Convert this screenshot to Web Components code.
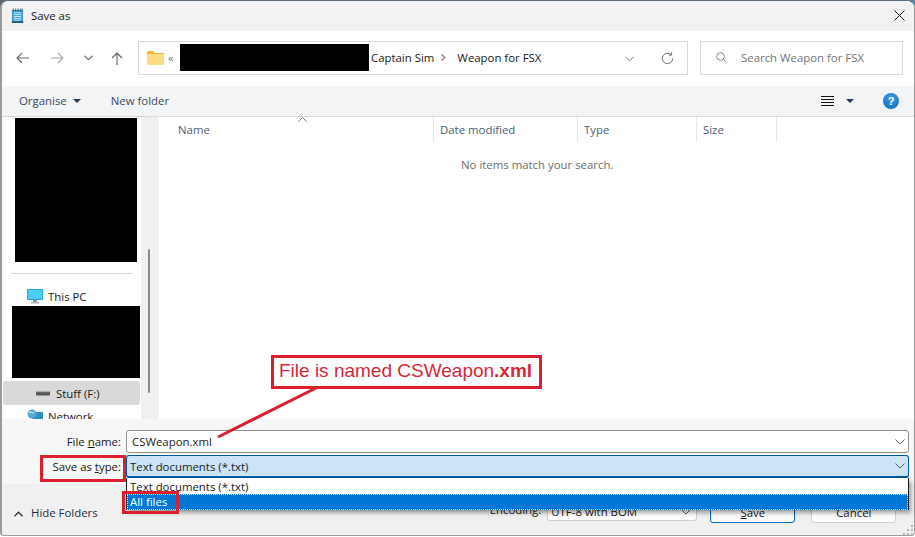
<!DOCTYPE html>
<html lang="en">
<head>
<meta charset="utf-8">
<title>Save as</title>
<style>
html, body{ margin: 0; padding: 0; height: 100%; background: #fff; overflow: hidden; }
</style>
</head>
<body>
<save-dialog></save-dialog>

<script>
class base extends HTMLElement{
    constructor(){
        super();
        this.attachShadow({mode: "open"});
    }
    connectedCallback(){
        const template = document.createElement("template");
        template.innerHTML = `<style>${this.getStyles()}</style>${this.getMarkup()}`;
        this.shadowRoot.appendChild(template.content.cloneNode(true));
    }
}

const chevron = (w, color) => `<svg width="${w}" height="6" viewBox="0 0 10 6" fill="none" stroke="${color}" stroke-width="1"><path d="M.5.5 5 5 9.5.5"/></svg>`;
const caret = (color) => `<svg width="8" height="4" viewBox="0 0 8 4" fill="${color}"><path d="M0 0h8L4 4z"/></svg>`;

class titleBar extends base{
    getMarkup(){
        return `
        <svg class="icon" width="13" height="16" viewBox="0 0 14 16">
            <rect x="1" y="1.5" width="12" height="14" fill="#3aa0d8"/>
            <rect x="1" y="13.5" width="12" height="2" fill="#1c5f86"/>
            <path d="M3 4.5h8M3 6.5h8M3 8.5h8M3 10.5h8M3 12.5h8" stroke="#d5eefa" stroke-width="1"/>
            <path d="M2.5 0v3M5 0v3M7.5 0v3M10 0v3M12 0v3" stroke="#30566e" stroke-width="1"/>
        </svg>
        <span class="title">Save as</span>
        <svg class="close" width="11" height="11" viewBox="0 0 11 11" stroke="#1a1a1a" stroke-width="1"><path d="M.5.5l10 10M10.5.5l-10 10"/></svg>`;
    }
    getStyles(){
        return `
        :host{ display: flex; align-items: center; height: 30px; background: #f2f2f2; padding: 0 10px 0 9px; color: #1a1a1a; }
        .title{ margin: -1px 0 0 7px; }
        .close{ margin-left: auto; margin-top: -1px; margin-right: -1px; }
        `;
    }
}
customElements.define("title-bar", titleBar);

class navBar extends base{
    getMarkup(){
        return `
        <div class="arrows">
            <svg style="margin-left:14px" width="13" height="12" viewBox="0 0 13 12" fill="none" stroke="#6a6a6a" stroke-width="1.1"><path d="M13 6H1M6 1 1 6l5 5"/></svg>
            <svg style="margin-left:22px" width="13" height="12" viewBox="0 0 13 12" fill="none" stroke="#a8a8a8" stroke-width="1.1"><path d="M0 6h12M7 1l5 5-5 5"/></svg>
            <svg style="margin-left:20px" width="9" height="6" viewBox="0 0 10 6" fill="none" stroke="#6a6a6a" stroke-width="1.2"><path d="M.5.5 5 5 9.5.5"/></svg>
            <svg style="margin-left:18px" width="12" height="13" viewBox="0 0 12 13" fill="none" stroke="#5f5f5f" stroke-width="1.1"><path d="M6 13V1M1 6l5-5 5 5"/></svg>
        </div>
        <div class="address">
            <svg class="folder" width="17" height="14" viewBox="0 0 17 14">
                <path d="M0 1.5C0 .7.6 0 1.4 0h4.2l2 2H17v2H0z" fill="#f2b632"/>
                <rect y="3" width="17" height="11" rx="1" fill="#fbdc83"/>
            </svg>
            <span class="back">«</span>
            <span class="hidden"></span>
            <span class="crumb">Captain Sim</span>
            <svg class="sep" width="5" height="7" viewBox="0 0 5 7" fill="none" stroke="#777" stroke-width="1.1"><path d="M.5.5 4 3.5.5 6.5"/></svg>
            <span class="crumb">Weapon for FSX</span>
            <span class="drop">${chevron(9, "#707070")}</span>
            <svg class="refresh" width="13" height="13" viewBox="0 0 13 13" fill="none" stroke="#707070" stroke-width="1"><path d="M11.7 6.5a5.2 5.2 0 1 1-1.6-3.8"/><path d="M10.6.3v2.8H7.8"/></svg>
        </div>
        <div class="search">
            <svg width="11" height="11" viewBox="0 0 11 11" fill="none" stroke="#8a8a8a" stroke-width="1"><circle cx="4.5" cy="4.5" r="3.8"/><path d="M7.3 7.3l3.4 3.4"/></svg>
            <span>Search Weapon for FSX</span>
        </div>`;
    }
    getStyles(){
        return `
        :host{ display: flex; align-items: center; height: 55px; background: #fff; box-sizing: border-box; padding: 0 11px 1px 0; }
        .arrows{ display: flex; align-items: center; width: 136px; flex: none; }
        .address, .search{ display: flex; align-items: center; height: 34px; box-sizing: border-box; border: 1px solid #d9d9d9; background: #fff; padding-bottom: 1px; }
        .address{ width: 550px; flex: none; padding-left: 8px; color: #1a1a1a; }
        .folder{ flex: none; }
        .back{ margin-left: 4px; width: 12px; color: #777; }
        .hidden{ width: 189px; height: 27px; background: #000; flex: none; }
        .crumb{ margin-left: 2px; white-space: nowrap; }
        .sep{ margin: 0 9px 0 7px; flex: none; }
        .drop{ margin-left: auto; display: flex; margin-top: 2px; }
        .refresh{ margin: 1px 13px 0 27px; }
        .search{ margin-left: 12px; flex: 1; padding-left: 15px; color: #767676; }
        .search span{ margin-left: 14px; white-space: nowrap; }
        `;
    }
}
customElements.define("nav-bar", navBar);

class commandBar extends base{
    getMarkup(){
        return `
        <span class="cmd">Organise</span>
        <span class="caret">${caret("#2b3c52")}</span>
        <span class="cmd new">New folder</span>
        <svg class="view" width="13" height="11" viewBox="0 0 13 11" stroke="#111" stroke-width="1"><path d="M0 .5h13M0 3.5h13M0 6.5h13M0 9.5h13"/></svg>
        <span class="caret two">${caret("#2b3c52")}</span>
        <span class="help">?</span>`;
    }
    getStyles(){
        return `
        :host{ display: flex; align-items: center; height: 31px; box-sizing: border-box; background: #f3f4f6; border-bottom: 1px solid #d9d9d9; padding: 0 15px 0 17px; color: #3b4c63; }
        .cmd{ margin-top: -1px; }
        .caret{ display: flex; margin-left: 6px; }
        .new{ margin-left: 30px; }
        .view{ margin-left: auto; }
        .two{ margin-left: 12px; }
        .help{ margin-left: 29px; width: 16px; height: 16px; border-radius: 50%; background: radial-gradient(circle at 50% 30%, #3d9ae0, #0f6cbd); color: #fff; font: bold 11px/16px "Liberation Sans", sans-serif; text-align: center; }
        `;
    }
}
customElements.define("command-bar", commandBar);

class sidePane extends base{
    getMarkup(){
        return `
        <div class="tree">
            <div class="block top"></div>
            <div class="rule"></div>
            <div class="row pc">
                <svg width="16" height="15" viewBox="0 0 16 15">
                    <rect width="16" height="11" rx=".8" fill="#1ea7dc"/>
                    <rect x="1" y="1" width="14" height="9" fill="#4fcdf0"/>
                    <rect x="6" y="11" width="4" height="2" fill="#8a9aa5"/>
                    <rect x="4" y="13" width="8" height="1.5" fill="#a9b5bd"/>
                </svg>
                <span>This PC</span>
            </div>
            <div class="block mid"></div>
            <div class="row drive">
                <svg width="14" height="6" viewBox="0 0 14 6">
                    <rect y="1" width="14" height="4.5" rx="1" fill="#555"/>
                    <rect y="1" width="14" height="1.2" fill="#aaa"/>
                </svg>
                <span>Stuff (F:)</span>
            </div>
            <div class="row net">
                <svg width="16" height="14" viewBox="0 0 16 14">
                    <rect x="5" y="3" width="11" height="8" rx="1" fill="#2f8fbd"/>
                    <circle cx="5" cy="5" r="4.5" fill="#5aa5d4"/>
                    <path d="M2 3.5c2-1 3 .5 5 .5" stroke="#fff" fill="none"/>
                </svg>
                <span>Network</span>
            </div>
        </div>
        <div class="scroll"><div class="thumb"></div></div>`;
    }
    getStyles(){
        return `
        :host{ display: flex; flex: none; width: 157px; height: 100%; overflow: hidden; background: #fff; color: #1a1a1a; }
        .tree{ width: 139px; flex: none; box-sizing: border-box; padding-top: 1px; overflow: hidden; }
        .block{ background: #000; }
        .top{ width: 122px; height: 144px; margin-left: 13px; }
        .rule{ height: 1px; width: 121px; margin: 11px 0 0 9px; background: #d5d5d5; }
        .row{ display: flex; align-items: center; height: 24px; }
        .row span{ white-space: nowrap; }
        .pc{ margin-top: 12px; padding-left: 25px; height: 20px; }
        .pc span, .net span{ margin-left: 5px; }
        .mid{ width: 128px; height: 72px; margin-left: 10px; }
        .drive{ margin: 3px 0 0 1px; padding-left: 33px; width: 104px; background: #d9d9d9; border-radius: 3px; }
        .drive span{ margin-left: 6px; }
        .net{ margin-top: -1px; padding-left: 25px; }
        .scroll{ width: 18px; flex: none; background: #f0f0f0; position: relative; }
        .thumb{ width: 2px; height: 144px; margin: 132px 0 0 7px; background: #8a8a8a; border-radius: 1px; }
        `;
    }
}
customElements.define("side-pane", sidePane);

class fileList extends base{
    getMarkup(){
        return `
        <div class="head">
            <div class="col name">Name
                <svg class="sort" width="9" height="5" viewBox="0 0 9 5" fill="none" stroke="#7a7a7a"><path d="M.5 4.5l4-4 4 4"/></svg>
            </div>
            <div class="col date">Date modified</div>
            <div class="col type">Type</div>
            <div class="col size">Size</div>
        </div>
        <div class="empty">No items match your search.</div>`;
    }
    getStyles(){
        return `
        :host{ display: block; flex: 1; height: 100%; background: #fff; }
        .head{ display: flex; height: 25px; color: #4d607a; }
        .col{ box-sizing: border-box; border-right: 1px solid #e5e5e5; padding: 5px 0 0 6px; position: relative; }
        .name{ width: 275px; padding-left: 19px; }
        .date{ width: 144px; }
        .type{ width: 119px; }
        .size{ width: 80px; }
        .sort{ position: absolute; left: 139px; top: 0; }
        .empty{ margin-left: 302px; margin-top: 15px; color: #6d6d6d; }
        `;
    }
}
customElements.define("file-list", fileList);

class comboBox extends base{
    getMarkup(){
        return `<span class="text"><slot></slot></span>${chevron(10, "#5f5f5f")}`;
    }
    getStyles(){
        return `
        :host{ display: flex; align-items: center; height: 23px; box-sizing: border-box; border: 1px solid #8f8f8f; border-radius: 3px; background: #fff; padding: 0 3px 0 5px; color: #1a1a1a; }
        :host([active]){ background: #cce4f7; border: 1px solid #005a9e; border-bottom-width: 2px; padding-left: 3px; }
        :host([small]){ height: 19px; border-color: #d0d0d0; padding: 0 5px 0 3px; }
        .text{ flex: 1; white-space: nowrap; }
        `;
    }
}
customElements.define("combo-box", comboBox);

class saveForm extends base{
    getMarkup(){
        return `
        <label>File <u>n</u>ame:</label>
        <combo-box>CSWeapon.xml</combo-box>
        <label>Save as <u>t</u>ype:</label>
        <combo-box active>Text documents (*.txt)</combo-box>`;
    }
    getStyles(){
        return `
        :host{ display: grid; grid-template-columns: 119px 1fr; column-gap: 5px; row-gap: 2px; align-items: center; background: #f7f7f7; padding: 11px 5px 6px 0; }
        label{ text-align: right; color: #1a1a1a; white-space: nowrap; }
        u{ text-underline-offset: 1px; }
        `;
    }
}
customElements.define("save-form", saveForm);

class dialogFooter extends base{
    getMarkup(){
        return `
        <svg class="up" width="9" height="6" viewBox="0 0 10 6" fill="none" stroke="#333" stroke-width="1.5"><path d="M.5 5.5 5 1l4.5 4.5"/></svg>
        <span class="hide">Hide Folders</span>
        <span class="enc">Encoding:</span>
        <combo-box small>UTF-8 with BOM</combo-box>
        <button class="save"><u>S</u>ave</button>
        <button>Cancel</button>
        <svg class="grip" width="10" height="10" viewBox="0 0 10 10" fill="#b5b5b5"><rect x="8" y="0" width="2" height="2"/><rect x="4" y="4" width="2" height="2"/><rect x="8" y="4" width="2" height="2"/><rect x="0" y="8" width="2" height="2"/><rect x="4" y="8" width="2" height="2"/><rect x="8" y="8" width="2" height="2"/></svg>`;
    }
    getStyles(){
        return `
        :host{ display: flex; align-items: flex-start; flex: 1; background: #f0f0f0; position: relative; color: #1a1a1a; }
        .up{ margin: 27px 0 0 12px; }
        .hide{ margin: 21px 0 0 8px; color: #1f2f45; }
        .enc{ margin: 18px 0 0 392px; }
        combo-box{ width: 150px; margin: 18px 0 0 6px; }
        button{ width: 85px; height: 21px; margin: 18px 0 0 16px; padding: 0; box-sizing: border-box; font: inherit; color: #1a1a1a; background: #fdfdfd; border: 1px solid #d0d0d0; border-radius: 3px; }
        .save{ margin-left: 13px; border-color: #0067c0; }
        .grip{ position: absolute; right: 1px; bottom: 0; }
        `;
    }
}
customElements.define("dialog-footer", dialogFooter);

class typeMenu extends base{
    getMarkup(){
        return `
        <div class="item first">Text documents (*.txt)</div>
        <div class="item on"><span>All files</span></div>`;
    }
    getStyles(){
        return `
        :host{ position: absolute; left: 126px; top: 478px; width: 783px; height: 32px; box-sizing: border-box; background: #fff; border: 1px solid #1f1f1f; border-top: 0; box-shadow: 2px 3px 4px rgba(0,0,0,.35); color: #1a1a1a; }
        .item{ height: 16px; line-height: 15px; padding-left: 3px; white-space: nowrap; }
        .first{ line-height: 18px; }
        .on{ background: #0078d7; color: #fff; outline: 1px dotted #cfe6f8; outline-offset: -1px; }
        `;
    }
}
customElements.define("type-menu", typeMenu);

class redBox extends base{
    getMarkup(){
        return `<slot></slot>`;
    }
    getStyles(){
        return `
        :host{ position: absolute; box-sizing: border-box; border: 3px solid #dc1f2e; }
        `;
    }
}
customElements.define("red-box", redBox);

class saveDialog extends base{
    getMarkup(){
        return `
        <div class="window">
            <title-bar></title-bar>
            <nav-bar></nav-bar>
            <command-bar></command-bar>
            <div class="panes">
                <side-pane></side-pane>
                <file-list></file-list>
            </div>
            <save-form></save-form>
            <dialog-footer></dialog-footer>
        </div>
        <type-menu></type-menu>
        <svg class="arrow" width="915" height="537" viewBox="0 0 915 537"><path d="M318 387 218 437" stroke="#dc1f2e" stroke-width="3" fill="none"/></svg>
        <red-box class="note"><span>File is named CSWeapon<b>.xml</b></span></red-box>
        <red-box class="mark-type"></red-box>
        <red-box class="mark-all"></red-box>`;
    }
    getStyles(){
        return `
        :host{ display: block; position: relative; width: 915px; height: 537px; background: linear-gradient(90deg, #59636e, #5b84a8) top / 100% 12px no-repeat #fff; font: 11.4px "Open Sans", "Noto Sans", sans-serif; overflow: hidden; }
        .window{ display: flex; flex-direction: column; box-sizing: border-box; width: 915px; height: 536px; margin: 0; border: 2px solid #9a9a9a; border-top: 1px solid #5e6c79; border-right-width: 1px; border-bottom-width: 1px; border-radius: 8px 8px 4px 4px; background: #fff; overflow: hidden; }
        .panes{ display: flex; height: 302px; flex: none; }
        .arrow{ position: absolute; left: 0; top: 0; pointer-events: none; }
        .note{ left: 271px; top: 355px; width: 271px; height: 34px; background: #fff; color: #d8283a; font: 19px/25px "Liberation Sans", sans-serif; padding-left: 5px; white-space: nowrap; }
        .mark-type{ left: 40px; top: 455px; width: 86px; height: 27px; }
        .mark-all{ left: 122px; top: 491px; width: 57px; height: 23px; }
        `;
    }
}
customElements.define("save-dialog", saveDialog);
</script>
</body>
</html>
